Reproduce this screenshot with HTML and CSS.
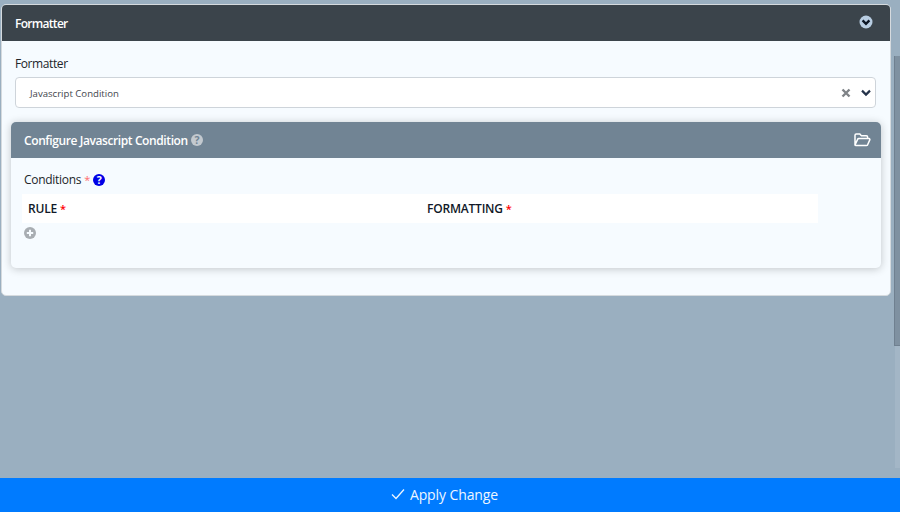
FILE: index.html
```html
<!DOCTYPE html>
<html lang="en">
<head>
<meta charset="utf-8">
<title>Formatter</title>
<link rel="stylesheet" href="styles.css">
</head>
<body>
<div class="viewport">
  <main class="content">
    <section class="card">
      <header class="card-head">
        <span class="card-title">Formatter</span>
        <svg class="chev-circle" viewBox="0 0 14 14" width="14" height="14"><circle cx="7" cy="7" r="6.5" fill="#b8cde2"/><path d="M3.6 5.400 7 8.800l3.400-3.400" fill="none" stroke="#0b1524" stroke-width="2.400"/></svg>
      </header>
      <div class="card-body">
        <label class="field-label">Formatter</label>
        <div class="select">
          <span class="select-value">Javascript Condition</span>
          <svg class="select-x" viewBox="0 0 10 10" width="10" height="10"><path d="M1.500 1.500l7 7M8.500 1.500l-7 7" stroke="#7f8387" stroke-width="2.400" fill="none"/></svg>
          <svg class="select-chev" viewBox="0 0 10 8" width="10" height="8"><path d="M1 1.600l4 4 4-4" stroke="#25334a" stroke-width="2.200" fill="none"/></svg>
        </div>
        <section class="panel">
          <header class="panel-head">
            <span class="panel-title">Configure Javascript Condition</span>
            <svg class="q-icon" viewBox="0 0 12 12" width="12" height="12"><circle cx="6" cy="6" r="6" fill="#c3c9cf"/><text x="6" y="9.800" text-anchor="middle" class="q-glyph q-grey">?</text></svg>
            <svg class="folder" viewBox="0 0 17 14" width="17" height="14"><path d="M1 12V2.200C1 1.500 1.500 1 2.200 1h3.600l1.600 1.800h5c.7 0 1.200.5 1.200 1.200v1.600M1 12l2.600-5.600c.2-.5.6-.8 1.200-.8H15c.7 0 1.100.7.8 1.300L13.600 11.800c-.2.400-.6.700-1.100.700H2C1.400 12.500 1 12.400 1 12z" fill="none" stroke="#fff" stroke-width="1.500"/></svg>
          </header>
          <div class="panel-body">
            <div class="cond-label">Conditions <span class="star-soft">*</span>
              <svg class="q-icon-blue" viewBox="0 0 12 12" width="12" height="12"><circle cx="6" cy="6" r="6" fill="#0000e6"/><text x="6" y="9.800" text-anchor="middle" class="q-glyph q-white">?</text></svg>
            </div>
            <div class="table-head">
              <div class="th th-rule">RULE <span class="star">*</span></div>
              <div class="th th-format">FORMATTING <span class="star">*</span></div>
            </div>
            <svg class="add" viewBox="0 0 12 12" width="12" height="12"><circle cx="6" cy="6" r="6" fill="#a8adb2"/><path d="M6 2.800v6.400M2.800 6h6.400" stroke="#f6fbff" stroke-width="2"/></svg>
          </div>
        </section>
      </div>
    </section>
  </main>
  <div class="scrollbar"><div class="thumb"></div><div class="track"></div></div>
</div>
<button class="apply" type="button">
  <svg viewBox="0 0 14 12" width="14" height="12"><path d="M1 6.500l4 4L13 1.500" fill="none" stroke="#eef6ff" stroke-width="1.300"/></svg>
  <span class="apply-text">Apply Change</span>
</button>
</body>
</html>
```

FILE: styles.css
```css
* { box-sizing: border-box; }
html, body { margin: 0; height: 100%; overflow: hidden; }
body {
  display: flex;
  flex-direction: column;
  height: 512px;
  background: #9aafc0;
  font-family: "Open Sans", "Noto Sans", sans-serif;
  color: #212529;
}
.viewport { flex: 1; display: flex; min-height: 0; }
.content { flex: 1; padding: 4px 3px 0 1px; }
.card {
  background: #f6fbff;
  border: 1px solid #d5dade;
  border-radius: 5px;
  height: 292px;
  overflow: hidden;
}
.card-head {
  height: 36px;
  background: #3b444b;
  display: flex;
  align-items: center;
  justify-content: space-between;
  padding: 0 17px 0 13px;
  color: #fff;
}
.card-title { font-size: 12px; font-weight: 600; letter-spacing: -.7px; }
.chev-circle { margin-top: -2px; }
.card-body { padding: 14px 9px 0; }
.field-label { display: block; font-size: 12px; letter-spacing: -.4px; line-height: 17px; margin: 0 0 5px 4px; color: #212529; }
.select {
  height: 31px;
  margin: 0 5px 0 4px;
  background: #fff;
  border: 1px solid #ced4da;
  border-radius: 4px;
  display: flex;
  align-items: center;
  padding: 0 4px 0 14px;
}
.select-value { flex: 1; font-size: 9.600px; line-height: 13px; padding-top: 1px; color: #3f464d; }
.select-x { margin-right: 10px; margin-left: 1px; }
.panel {
  margin-top: 14px;
  height: 146px;
  background: #f6fbff;
  border-radius: 5px;
  box-shadow: 0 1px 9px rgba(0,0,0,.22);
  overflow: hidden;
}
.panel-head {
  height: 36px;
  background: #718494;
  display: flex;
  align-items: center;
  padding: 0 10px 0 13px;
  color: #fff;
}
.panel-title { font-size: 12px; font-weight: 600; letter-spacing: -.4px; }
.q-icon { margin-left: 3px; }
.folder { margin-left: auto; }
.q-glyph { font-size: 10.500px; font-weight: 700; font-family: "Open Sans", sans-serif; }
.q-grey { fill: #718494; }
.q-white { fill: #fff; }
.panel-body { padding: 14px 13px 0; }
.cond-label { font-size: 12px; letter-spacing: -.3px; line-height: 16px; display: flex; align-items: center; gap: 3px; }
.star-soft { color: #ff6b6b; font-size: 11px; }
.q-icon-blue { margin-left: 0; }
.table-head {
  display: flex;
  width: 796px;
  height: 29px;
  margin: 6px 0 0 -2px;
  background: #fff;
  align-items: center;
  font-size: 12px;
  font-weight: 600;
  letter-spacing: -.2px;
  color: #101828;
}
.th { padding-left: 6px; }
.th-rule { width: 398px; }
.th-format { padding-left: 7px; }
.star { color: #f00; font-size: 11px; }
.add { display: block; margin-top: 4px; }
.scrollbar { width: 6px; }
.thumb { height: 290px; margin-top: 56px; background: #7f91a1; border-left: 1px solid #6f8090; border-bottom: 1px solid #6f8090; }
.track { height: 122px; margin-left: 1px; background: #a3b6c6; }
.apply {
  height: 34px;
  width: 100%;
  border: 0;
  background: #007bff;
  color: #eef6ff;
  font-family: inherit;
  font-size: 14px;
  display: flex;
  align-items: center;
  justify-content: center;
  gap: 5px;
  padding: 0 11px 2px 0;
}
.apply-text { letter-spacing: -.1px; }
```
